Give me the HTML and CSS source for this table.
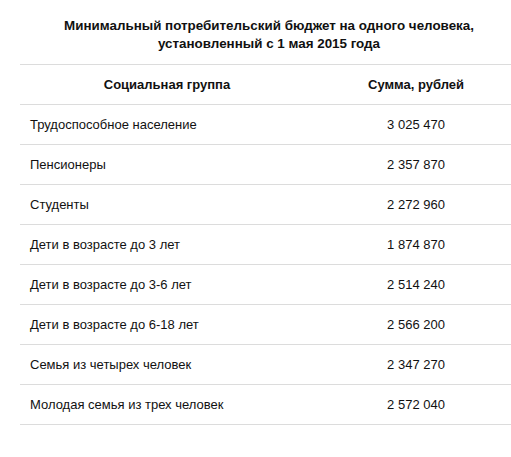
FILE: index.html
```html
<!DOCTYPE html>
<html lang="ru">
<head>
<meta charset="utf-8">
<link rel="stylesheet" href="styles.css">
</head>
<body>
<div class="wrap">
  <table class="budget">
    <caption class="title">Минимальный потребительский бюджет на одного человека,<br>установленный с 1 мая 2015 года</caption>
    <thead>
      <tr><th class="c1">Социальная группа</th><th class="c2">Сумма, рублей</th></tr>
    </thead>
    <tbody>
      <tr><td class="c1">Трудоспособное население</td><td class="c2">3 025 470</td></tr>
      <tr><td class="c1">Пенсионеры</td><td class="c2">2 357 870</td></tr>
      <tr><td class="c1">Студенты</td><td class="c2">2 272 960</td></tr>
      <tr><td class="c1">Дети в возрасте до 3 лет</td><td class="c2">1 874 870</td></tr>
      <tr><td class="c1">Дети в возрасте до 3-6 лет</td><td class="c2">2 514 240</td></tr>
      <tr><td class="c1">Дети в возрасте до 6-18 лет</td><td class="c2">2 566 200</td></tr>
      <tr><td class="c1">Семья из четырех человек</td><td class="c2">2 347 270</td></tr>
      <tr><td class="c1">Молодая семья из трех человек</td><td class="c2">2 572 040</td></tr>
    </tbody>
  </table>
</div>
</body>
</html>
```

FILE: styles.css
```css
html, body {
  margin: 0;
  padding: 0;
  background: #fff;
  overflow: hidden;
}
body {
  font-family: "Liberation Sans", Arial, sans-serif;
  color: #111;
  font-size: 13px;
}
.wrap {
  padding: 17px 0 0 20px;
}
.budget {
  width: 498px;
  border-collapse: collapse;
}
.title {
  font-weight: bold;
  font-size: 13.4px;
  line-height: 18px;
  text-align: center;
  padding-bottom: 11px;
}
.budget th, .budget td {
  height: 39px;
  padding: 0 10px;
  border-top: 1px solid #dcdcdc;
  border-bottom: 1px solid #dcdcdc;
  vertical-align: middle;
}
.budget th {
  font-weight: bold;
  text-align: center;
}
.budget td.c1 {
  text-align: left;
  width: 274px;
}
.budget td.c2 {
  text-align: center;
}
```
